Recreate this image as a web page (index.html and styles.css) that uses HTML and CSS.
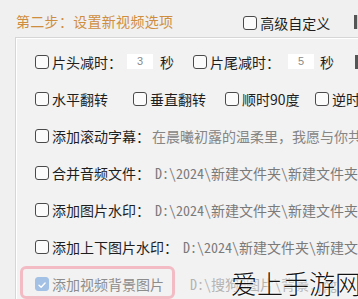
FILE: index.html
```html
<!DOCTYPE html>
<html lang="zh-CN">
<head>
<meta charset="utf-8">
<title>设置新视频选项</title>
<link rel="stylesheet" href="styles.css">
</head>
<body>
<div class="page">
  <div class="header">
    <span class="title">第二步：设置新视频选项</span>
    <label class="cb adv"><span class="box"></span><span>高级自定义</span></label>
    <span class="edge"></span>
  </div>
  <div class="panel">
    <div class="row">
      <label class="cb"><span class="box"></span><span>片头减时：</span></label>
      <span class="num n1">3</span>
      <span class="unit u1">秒</span>
      <label class="cb tail"><span class="box"></span><span>片尾减时：</span></label>
      <span class="num n2">5</span>
      <span class="unit u2">秒</span>
      <span class="edge e2"></span>
    </div>
    <div class="row grid4">
      <label class="cb"><span class="box"></span><span>水平翻转</span></label>
      <label class="cb"><span class="box"></span><span>垂直翻转</span></label>
      <label class="cb"><span class="box"></span><span>顺时90度</span></label>
      <label class="cb"><span class="box"></span><span>逆时针90度</span></label>
    </div>
    <div class="row">
      <label class="cb"><span class="box"></span><span>添加滚动字幕：</span></label>
      <span class="val v3">在晨曦初露的温柔里，我愿与你共度每一个清晨</span>
    </div>
    <div class="row">
      <label class="cb"><span class="box"></span><span>合并音频文件：</span></label>
      <span class="path p4">D:\2024\新建文件夹\新建文件夹\音频.mp3</span>
    </div>
    <div class="row">
      <label class="cb"><span class="box"></span><span>添加图片水印：</span></label>
      <span class="path p4">D:\2024\新建文件夹\新建文件夹\水印.png</span>
    </div>
    <div class="row">
      <label class="cb"><span class="box"></span><span>添加上下图片水印：</span></label>
      <span class="path p4">D:\2024\新建文件夹\新建文件夹\上下.png</span>
    </div>
    <div class="row last">
      <label class="cb disabled"><span class="box checked"><svg viewBox="0 0 14 14" width="14" height="14"><path d="M3.5 7.2 L6 9.6 L10.6 4.6" fill="none" stroke="#fff" stroke-width="1.6" stroke-linecap="round" stroke-linejoin="round"/></svg></span><span>添加视频背景图片</span></label>
      <span class="path p7">D:\搜狗@图片\背景.jpg</span>
      <span class="highlight"></span>
      <span class="watermark">爱上手游网</span>
    </div>
  </div>
</div>
</body>
</html>
```

FILE: styles.css
```css
html, body {
  margin: 0;
  padding: 0;
  background: #f0f0f0;
  overflow: hidden;
}
.page {
  width: 358px;
  height: 299px;
  overflow: hidden;
  font-family: "Noto Sans CJK SC", "Noto Sans", sans-serif;
  font-size: 14px;
  color: #1e1e1e;
}
.header {
  height: 37px;
  box-sizing: border-box;
  padding: 4px 0 0 16px;
  display: flex;
  align-items: center;
  white-space: nowrap;
}
.title {
  color: #cf8e3f;
  letter-spacing: 0.3px;
  line-height: 16px;
}
.adv { margin-left: 70px; margin-top: 5px; }
.edge {
  display: inline-block;
  flex: none;
  width: 12px;
  height: 14px;
  margin-left: 24px;
  margin-top: 2px;
  box-sizing: border-box;
  border-left: 3px solid #555555;
  background: #d2d2d2;
}
.panel {
  margin-left: 15px;
  border-top: 1px solid #d6d6d6;
  border-left: 1px solid #d6d6d6;
  box-shadow: inset 1px 1px 0 #ffffff;
  background: #f2f2f2;
  padding: 5px 0 0 19px;
  height: 300px;
}
.row {
  height: 37px;
  display: flex;
  align-items: center;
  white-space: nowrap;
  overflow: visible;
  position: relative;
}
.cb {
  display: inline-flex;
  align-items: center;
  gap: 3px;
  flex: none;
  line-height: 16px;
}
.box {
  width: 14px;
  height: 14px;
  box-sizing: border-box;
  border: 1px solid #4a4a4a;
  border-radius: 3px;
  background: #fbfbfb;
  flex: none;
  display: inline-flex;
}
.box.checked {
  background: #a3c1e4;
  border-color: #a3c1e4;
}
.disabled { color: #8c8c8c; }
.num {
  display: inline-block;
  width: 26px;
  height: 15px;
  background: #ffffff;
  color: #8a8a8a;
  font-family: "Liberation Sans", sans-serif;
  font-size: 11px;
  line-height: 15px;
  text-align: center;
  flex: none;
}
.n1 { margin-left: 5px; }
.u1 { margin-left: 7px; }
.tail { margin-left: 19px; }
.n2 { margin-left: 8px; }
.u2 { margin-left: 6px; }
.unit { line-height: 16px; flex: none; }
.e2 { margin-left: 21px; margin-top: 0; }
.grid4 {
  display: grid;
  grid-template-columns: 98px 92px 90px 120px;
  align-items: center;
}
.val {
  color: #858585;
  margin-left: 2px;
  line-height: 16px;
}
.path {
  color: #7a7a7a;
  font-family: "Noto Sans Mono CJK SC", "Liberation Mono", "Noto Sans CJK SC", monospace;
  font-size: 14px;
  line-height: 16px;
}
.p4 { margin-left: 5px; }
.p7 { margin-left: 26px; color: #b4b4b4; }
.highlight {
  position: absolute;
  left: -15px;
  top: 1px;
  width: 155px;
  height: 33px;
  box-sizing: border-box;
  border: 3px solid #f3bcc4;
  border-radius: 6px;
}
.watermark {
  position: absolute;
  left: 196px;
  top: 2px;
  font-size: 26px;
  line-height: 32px;
  color: #141414;
  font-weight: 300;
  text-shadow: 0 0 2px #fff, 0 0 2px #fff, 0 0 3px #fff;
}
```
